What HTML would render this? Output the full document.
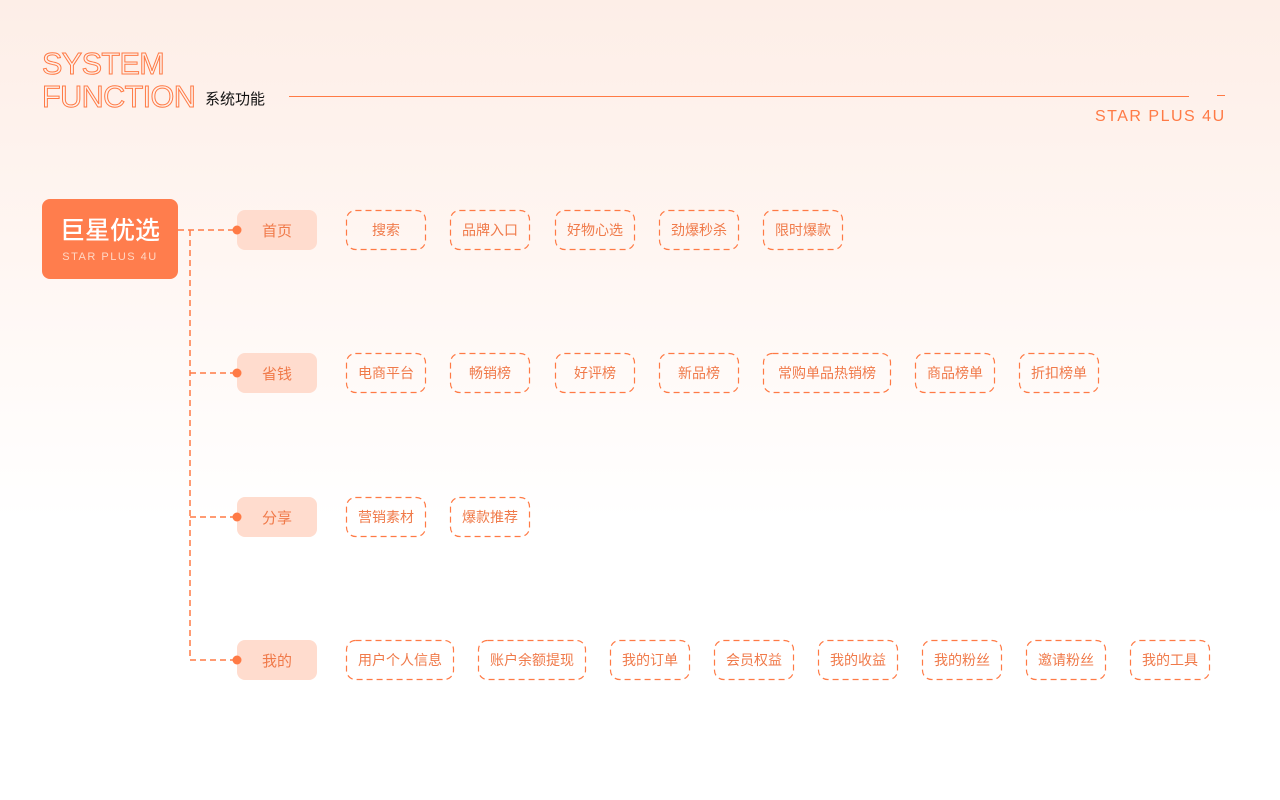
<!DOCTYPE html>
<html><head><meta charset="utf-8"><style>
*{margin:0;padding:0;box-sizing:border-box}
body{width:1280px;height:800px;position:relative;overflow:hidden;background:linear-gradient(#fdeee7 0px,#fff6f2 250px,#fff 520px,#fff 800px);font-family:"Liberation Sans","Noto Sans CJK SC",sans-serif}
.t{position:absolute;left:42px;font-size:30.6px;line-height:32px;color:transparent;-webkit-text-stroke:1px #ff7a45;letter-spacing:-0.6px}
.c{position:absolute;left:237px;width:80px;height:40px;border-radius:8px;background:#ffdcce;color:#f07a4a;font-size:15px;display:flex;align-items:center;justify-content:center}
.i{position:absolute;height:40px;color:#f07a4a;font-size:14px;display:flex;align-items:center;justify-content:center}
.i svg{position:absolute;left:0;top:0;width:100%;height:100%;overflow:visible}
.i rect{fill:none;stroke:#ff7a45;stroke-width:1.2;stroke-dasharray:6 4}
</style></head><body>
<div class="t" style="top:48px">SYSTEM</div>
<div class="t" style="top:81px">FUNCTION</div>
<div style="position:absolute;left:205px;top:88px;font-size:15px;color:#111">系统功能</div>
<div style="position:absolute;left:289px;top:96px;width:900px;height:1px;background:#ff7a45"></div>
<div style="position:absolute;left:1217px;top:95px;width:8px;height:1px;background:#ff7a45"></div>
<div style="position:absolute;left:1095px;top:108px;font-size:16px;letter-spacing:1.5px;color:#ff7a45">STAR PLUS 4U</div>

<div style="position:absolute;left:42px;top:199px;width:136px;height:80px;border-radius:8px;background:#ff7d4d;color:#fff;text-align:center">
<div style="font-size:25px;margin-top:12px;font-weight:500">巨星优选</div>
<div style="font-size:11px;letter-spacing:1.5px;margin-top:4px;color:#ffd7c4">STAR PLUS 4U</div></div>

<div class="c" style="top:210px">首页</div>
<div class="c" style="top:353px">省钱</div>
<div class="c" style="top:497px">分享</div>
<div class="c" style="top:640px">我的</div>

<svg style="position:absolute;left:0;top:0" width="1280" height="800">
<g stroke="#ff7a45" stroke-width="1.5" stroke-dasharray="6 4" fill="none">
<path d="M178 230H236M190 230V660M190 373H236M190 517H236M190 660H236"/>
</g>
<g fill="#ff7a45"><circle cx="237" cy="230" r="4.5"/><circle cx="237" cy="373" r="4.5"/><circle cx="237" cy="517" r="4.5"/><circle cx="237" cy="660" r="4.5"/></g>
</svg>

<div class="i" style="top:210px;left:346px;width:80px"><svg><rect x="0.5" y="0.5" width="79" height="39" rx="9"/></svg>搜索</div>
<div class="i" style="top:210px;left:450px;width:80px"><svg><rect x="0.5" y="0.5" width="79" height="39" rx="9"/></svg>品牌入口</div>
<div class="i" style="top:210px;left:555px;width:80px"><svg><rect x="0.5" y="0.5" width="79" height="39" rx="9"/></svg>好物心选</div>
<div class="i" style="top:210px;left:659px;width:80px"><svg><rect x="0.5" y="0.5" width="79" height="39" rx="9"/></svg>劲爆秒杀</div>
<div class="i" style="top:210px;left:763px;width:80px"><svg><rect x="0.5" y="0.5" width="79" height="39" rx="9"/></svg>限时爆款</div>

<div class="i" style="top:353px;left:346px;width:80px"><svg><rect x="0.5" y="0.5" width="79" height="39" rx="9"/></svg>电商平台</div>
<div class="i" style="top:353px;left:450px;width:80px"><svg><rect x="0.5" y="0.5" width="79" height="39" rx="9"/></svg>畅销榜</div>
<div class="i" style="top:353px;left:555px;width:80px"><svg><rect x="0.5" y="0.5" width="79" height="39" rx="9"/></svg>好评榜</div>
<div class="i" style="top:353px;left:659px;width:80px"><svg><rect x="0.5" y="0.5" width="79" height="39" rx="9"/></svg>新品榜</div>
<div class="i" style="top:353px;left:763px;width:128px"><svg><rect x="0.5" y="0.5" width="127" height="39" rx="9"/></svg>常购单品热销榜</div>
<div class="i" style="top:353px;left:915px;width:80px"><svg><rect x="0.5" y="0.5" width="79" height="39" rx="9"/></svg>商品榜单</div>
<div class="i" style="top:353px;left:1019px;width:80px"><svg><rect x="0.5" y="0.5" width="79" height="39" rx="9"/></svg>折扣榜单</div>

<div class="i" style="top:497px;left:346px;width:80px"><svg><rect x="0.5" y="0.5" width="79" height="39" rx="9"/></svg>营销素材</div>
<div class="i" style="top:497px;left:450px;width:80px"><svg><rect x="0.5" y="0.5" width="79" height="39" rx="9"/></svg>爆款推荐</div>

<div class="i" style="top:640px;left:346px;width:108px"><svg><rect x="0.5" y="0.5" width="107" height="39" rx="9"/></svg>用户个人信息</div>
<div class="i" style="top:640px;left:478px;width:108px"><svg><rect x="0.5" y="0.5" width="107" height="39" rx="9"/></svg>账户余额提现</div>
<div class="i" style="top:640px;left:610px;width:80px"><svg><rect x="0.5" y="0.5" width="79" height="39" rx="9"/></svg>我的订单</div>
<div class="i" style="top:640px;left:714px;width:80px"><svg><rect x="0.5" y="0.5" width="79" height="39" rx="9"/></svg>会员权益</div>
<div class="i" style="top:640px;left:818px;width:80px"><svg><rect x="0.5" y="0.5" width="79" height="39" rx="9"/></svg>我的收益</div>
<div class="i" style="top:640px;left:922px;width:80px"><svg><rect x="0.5" y="0.5" width="79" height="39" rx="9"/></svg>我的粉丝</div>
<div class="i" style="top:640px;left:1026px;width:80px"><svg><rect x="0.5" y="0.5" width="79" height="39" rx="9"/></svg>邀请粉丝</div>
<div class="i" style="top:640px;left:1130px;width:80px"><svg><rect x="0.5" y="0.5" width="79" height="39" rx="9"/></svg>我的工具</div>
</body></html>
